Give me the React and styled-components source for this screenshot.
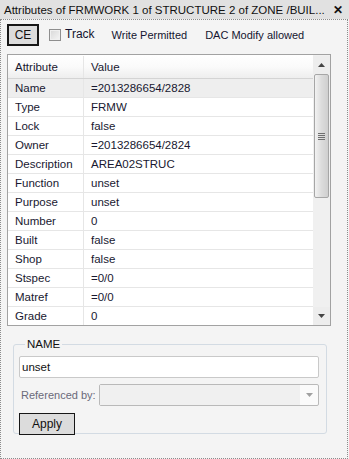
import styled, { createGlobalStyle } from 'styled-components';

const GlobalStyle = createGlobalStyle`
    body {
        margin: 0;
        font-family: "Liberation Sans", Arial, sans-serif;
        font-size: 11px;
        color: #1c1c2c;
    }
`

const Window = styled.div`
    width: 349px;
    height: 459px;
    background: #f4f4f4;
    display: flex;
    flex-direction: column;
    overflow: hidden;
`

const TitleBar = styled.div`
    height: 19px;
    flex: none;
    background: #e1e1e1;
    display: flex;
    align-items: center;
    justify-content: space-between;
    padding: 0 6px 0 4px;
    font-size: 11.5px;
    color: #111;
    white-space: nowrap;
`

const Close = styled.span`
    font-weight: bold;
    font-size: 12px;
`

const Body = styled.div`
    flex: 1;
    margin-right: 1px;
    border: 1px dotted #8c8c8c;
    padding: 4px 16px 0 6px;
    display: flex;
    flex-direction: column;
`

const Toolbar = styled.div`
    display: flex;
    align-items: center;
    height: 22px;
`

const Button = styled.button`
    font-family: inherit;
    font-size: 12px;
    color: #111;
    background: #dcdcdc;
    border: ${p => (p.$thick ? '2px' : '1px')} solid #161616;
    width: ${p => p.$width}px;
    height: 22px;
    padding: 0;
`

const Check = styled.span`
    width: 10px;
    height: 10px;
    margin: 0 4px 0 10px;
    border: 1px solid #8e8e8e;
    background: linear-gradient(135deg, #d8d8d8, #f6f6f6);
    box-shadow: inset 0 0 0 1px #f0f0f0;
`

const ToolText = styled.span`
    margin-left: ${p => p.$gap || 0}px;
    color: #141430;
    font-size: ${p => p.$up ? 12 : 11}px;
    margin-top: ${p => p.$up ? -3 : 0}px;
`

const TableFrame = styled.div`
    margin-top: 8px;
    height: 270px;
    border: 1px solid #a2a2a2;
    display: flex;
    background: #fff;
`

const GridArea = styled.div`
    flex: 1;
    overflow: hidden;
`

const Row = styled.div`
    display: grid;
    grid-template-columns: 75px 1fr;
    height: ${p => (p.$head ? 22 : 18)}px;
    border-bottom: 1px solid ${p => (p.$head ? '#d4d4d4' : '#e6e6e6')};
    background: ${p => p.$head
        ? 'linear-gradient(#ffffff 0%, #fafafa 50%, #eeeeee 100%)'
        : p.$active ? '#eeeeee' : '#ffffff'};
    margin-top: ${p => (p.$head ? 1 : 0)}px;
    font-size: 11.5px;
`

const Cell = styled.div`
    display: flex;
    align-items: center;
    padding-left: 7px;
    border-left: ${p => (p.$divide ? '1px solid #e6e6e6' : 'none')};
    color: #181830;
    white-space: nowrap;
`

const Scrollbar = styled.div`
    width: 17px;
    flex: none;
    background: #f0f0f0;
    display: flex;
    flex-direction: column;
    align-items: center;
    padding-top: 1px;
`

const Arrow = styled.div`
    width: 17px;
    height: 18px;
    display: flex;
    align-items: center;
    justify-content: center;
    background: #ededed;
`

const Thumb = styled.div`
    width: 13px;
    height: 122px;
    border: 1px solid #a6a6a6;
    border-radius: 2px;
    background: linear-gradient(90deg, #f2f2f2, #dcdcdc 50%, #cfcfcf);
    display: flex;
    flex-direction: column;
    align-items: center;
    justify-content: center;
    gap: 1px;
`

const Grip = styled.span`
    width: 7px;
    height: 1px;
    background: #6f6f6f;
`

const Spacer = styled.div`
    flex: 1;
`

const GroupBox = styled.fieldset`
    margin: 12px 4px 0 6px;
    height: 96px;
    border: 1px solid #d3dbe3;
    border-radius: 3px;
    padding: 0 7px 0 5px;
    display: flex;
    flex-direction: column;
    box-sizing: border-box;
`

const Legend = styled.legend`
    padding: 0 2px;
    margin-left: 6px;
    color: #111;
    line-height: 12px;
    font-size: 11.5px;
`

const NameInput = styled.div`
    margin-top: 6px;
    height: 20px;
    border: 1px solid #c9c9c9;
    background: #fff;
    border-radius: 2px;
    display: flex;
    align-items: center;
    padding-left: 2px;
    color: #111;
    font-size: 11.5px;
`

const RefRow = styled.div`
    display: flex;
    align-items: center;
    margin-top: 6px;
    gap: 3px;
`

const RefLabel = styled.span`
    color: #6a6a7a;
    padding-left: 2px;
    font-size: 11px;
`

const RefSelect = styled.div`
    flex: 1;
    height: 20px;
    border: 1px solid #b9b9b9;
    border-radius: 2px;
    background: #fafafa;
    display: flex;
`

const RefField = styled.div`
    flex: 1;
    background: #f0f0f0;
`

const RefArrow = styled.div`
    width: 18px;
    display: flex;
    align-items: center;
    justify-content: center;
`

const ApplyRow = styled.div`
    margin-top: 7px;
`

const rows = [
    ['Name', '=2013286654/2828'],
    ['Type', 'FRMW'],
    ['Lock', 'false'],
    ['Owner', '=2013286654/2824'],
    ['Description', 'AREA02STRUC'],
    ['Function', 'unset'],
    ['Purpose', 'unset'],
    ['Number', '0'],
    ['Built', 'false'],
    ['Shop', 'false'],
    ['Stspec', '=0/0'],
    ['Matref', '=0/0'],
    ['Grade', '0'],
]

const Tri = ({ down, color = '#444' }) => (
    <svg width="7" height="4" viewBox="0 0 7 4">
        <path d={down ? 'M0 0H7L3.5 4Z' : 'M0 4H7L3.5 0Z'} fill={color} />
    </svg>
)

const App = () => {
    return (
        <Window>
            <GlobalStyle />
            <TitleBar>
                <span>Attributes of FRMWORK 1 of STRUCTURE 2 of ZONE /BUIL...</span>
                <Close>✕</Close>
            </TitleBar>
            <Body>
                <Toolbar>
                    <Button $thick $width={32}>CE</Button>
                    <Check />
                    <ToolText $up>Track</ToolText>
                    <ToolText $gap={17}>Write Permitted</ToolText>
                    <ToolText $gap={18}>DAC Modify allowed</ToolText>
                </Toolbar>
                <TableFrame>
                    <GridArea>
                        <Row $head>
                            <Cell>Attribute</Cell>
                            <Cell $divide>Value</Cell>
                        </Row>
                        {rows.map(([name, value], i) => (
                            <Row key={name} $active={i === 0}>
                                <Cell>{name}</Cell>
                                <Cell $divide>{value}</Cell>
                            </Row>
                        ))}
                    </GridArea>
                    <Scrollbar>
                        <Arrow><Tri /></Arrow>
                        <Thumb>
                            <Grip /><Grip /><Grip /><Grip />
                        </Thumb>
                        <Spacer />
                        <Arrow><Tri down /></Arrow>
                    </Scrollbar>
                </TableFrame>
                <GroupBox>
                    <Legend>NAME</Legend>
                    <NameInput>unset</NameInput>
                    <RefRow>
                        <RefLabel>Referenced by:</RefLabel>
                        <RefSelect>
                            <RefField />
                            <RefArrow><Tri down color="#a0a0a0" /></RefArrow>
                        </RefSelect>
                    </RefRow>
                    <ApplyRow>
                        <Button $width={56}>Apply</Button>
                    </ApplyRow>
                </GroupBox>
            </Body>
        </Window>
    );
}

export default App;
